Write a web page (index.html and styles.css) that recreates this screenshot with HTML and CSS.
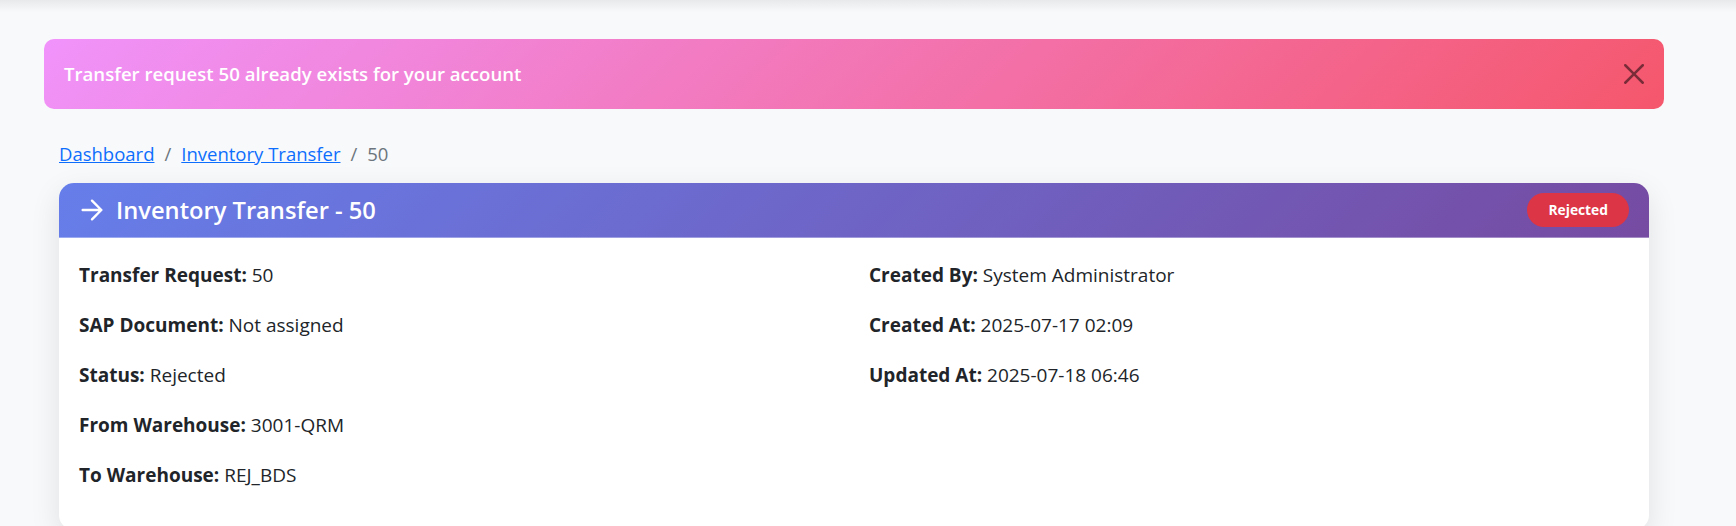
FILE: index.html
```html
<!DOCTYPE html>
<html lang="en">
<head>
<meta charset="utf-8">
<title>Inventory Transfer - 50</title>
<link rel="stylesheet" href="styles.css">
</head>
<body>
<main class="main">
  <div class="alert">
    <span class="alert-text">Transfer request 50 already exists for your account</span>
    <button class="btn-close" type="button" aria-label="Close">
      <svg viewBox="0 0 16 16" width="20" height="20"><path d="M.293.293a1 1 0 0 1 1.414 0L8 6.586 14.293.293a1 1 0 1 1 1.414 1.414L9.414 8l6.293 6.293a1 1 0 0 1-1.414 1.414L8 9.414l-6.293 6.293a1 1 0 0 1-1.414-1.414L6.586 8 .293 1.707a1 1 0 0 1 0-1.414z" fill="currentColor"/></svg>
    </button>
  </div>
  <div class="content">
    <nav class="breadcrumb">
      <a href="#">Dashboard</a><span class="sep">/</span><a href="#">Inventory Transfer</a><span class="sep">/</span><span class="current">50</span>
    </nav>
    <section class="card">
      <header class="card-header">
        <h4 class="card-title">
          <svg class="title-icon" viewBox="0 0 24 24" width="32" height="32"><path d="M5 12h14M12 5l7 7-7 7" fill="none" stroke="currentColor" stroke-width="1.8" stroke-linecap="round" stroke-linejoin="round"/></svg>
          <span>Inventory Transfer - 50</span>
        </h4>
        <span class="badge">Rejected</span>
      </header>
      <div class="card-body">
        <div class="col">
          <p><strong>Transfer Request:</strong> 50</p>
          <p><strong>SAP Document:</strong> Not assigned</p>
          <p><strong>Status:</strong> Rejected</p>
          <p><strong>From Warehouse:</strong> 3001-QRM</p>
          <p><strong>To Warehouse:</strong> REJ_BDS</p>
        </div>
        <div class="col">
          <p><strong>Created By:</strong> System Administrator</p>
          <p><strong>Created At:</strong> 2025-07-17 02:09</p>
          <p><strong>Updated At:</strong> 2025-07-18 06:46</p>
        </div>
      </div>
    </section>
  </div>
</main>
</body>
</html>
```
FILE: styles.css
```css
* { box-sizing: border-box; }
html, body { margin: 0; padding: 0; }
body {
  font-family: "Open Sans", "Noto Sans", sans-serif;
  font-size: 19px;
  line-height: 30px;
  color: #212529;
  background: linear-gradient(#e8e9eb 0, #f8f9fa 12px) #f8f9fa no-repeat;
  min-height: 526px;
}
.main {
  padding: 39px 0 0 44px;
}
.alert {
  width: 1620px;
  height: 70px;
  border-radius: 10px;
  background: linear-gradient(135deg, #f093fb 0%, #f5576c 100%);
  display: flex;
  align-items: center;
  justify-content: space-between;
  padding: 0 20px 0 20px;
  color: #fff;
}
.alert-text {
  font-weight: 600;
  font-size: 18.6px;
}
.btn-close {
  border: 0;
  background: transparent;
  padding: 0;
  width: 20px;
  height: 20px;
  color: #000;
  opacity: 0.5;
  display: flex;
}
.content {
  width: 1620px;
  padding: 0 15px;
}
.breadcrumb {
  margin-top: 30px;
  height: 30px;
  margin-bottom: 14px;
  display: flex;
  font-size: 18.5px;
  color: #6c757d;
}
.breadcrumb a {
  color: #0d6efd;
  text-decoration: underline;
}
.breadcrumb .sep {
  padding: 0 10px;
  color: #6c757d;
}
.card {
  background: #fff;
  border-radius: 15px;
  box-shadow: 0 10px 30px rgba(0, 0, 0, 0.1);
  overflow: hidden;
}
.card-header {
  height: 55px;
  background: linear-gradient(135deg, #667eea 0%, #764ba2 100%);
  border-bottom: 1px solid rgba(255, 255, 255, 0.35);
  display: flex;
  align-items: center;
  justify-content: space-between;
  padding: 0 20px 0 17px;
  color: #fff;
}
.card-title {
  margin: 0;
  font-size: 23.7px;
  font-weight: 600;
  line-height: 1.2;
  display: flex;
  align-items: center;
  gap: 8px;
}
.title-icon { display: block; }
.badge {
  background: #dc3545;
  color: #fff;
  font-weight: 700;
  font-size: 13.8px;
  line-height: 1;
  height: 34px;
  padding: 0 21px;
  border-radius: 17px;
  display: flex;
  align-items: center;
}
.card-body {
  padding: 22px 20px 20px;
  display: grid;
  grid-template-columns: 1fr 1fr;
  column-gap: 30px;
}
.card-body p {
  margin: 0 0 20px;
}
.card-body strong { font-weight: 700; }
```
